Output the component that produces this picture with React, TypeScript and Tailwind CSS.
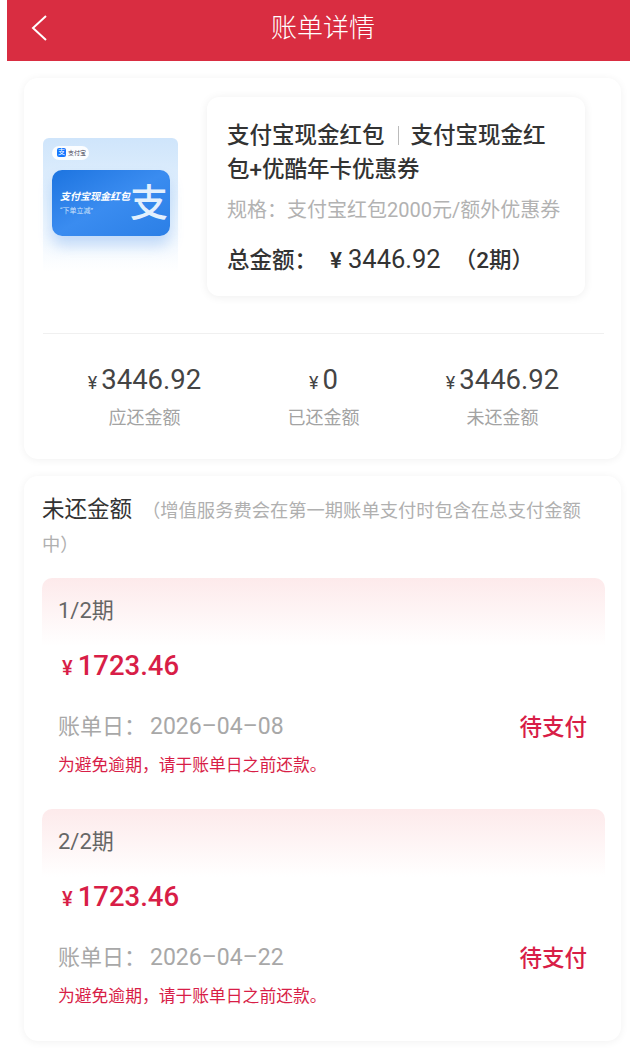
const fontStack = "font-['Roboto','Noto_Sans_CJK_SC',sans-serif]";

const stats = [
  { amount: '3446.92', label: '应还金额' },
  { amount: '0', label: '已还金额' },
  { amount: '3446.92', label: '未还金额' },
];

const installments = [
  { period: '1/2期', amount: '1723.46', date: '2026–04–08' },
  { period: '2/2期', amount: '1723.46', date: '2026–04–22' },
];

function ProductThumb() {
  return (
    <div className="w-[135px] h-[134px] mt-[16px] shrink-0 rounded-t-md bg-gradient-to-b from-[#cfe5fb] via-[#e6f2fd] to-white px-[9px] pt-[8px]">
      <div className="flex items-center gap-[2px] w-[37px] h-[14px] rounded-full bg-white/90 pl-[5px]">
        <div className="flex items-center justify-center w-[9px] h-[9px] rounded-[2px] bg-[#1677ff] text-[7px] leading-none text-white">支</div>
        <div className="text-[6px] leading-none text-[#445] whitespace-nowrap">支付宝</div>
      </div>
      <div className="flex items-center w-[118px] h-[66px] mt-[10px] rounded-[10px] bg-gradient-to-br from-[#1c74e0] via-[#3a8cf0] to-[#2b7fe6] pl-[8px] shadow-[0_10px_14px_rgba(70,140,235,0.28)]">
        <div className="w-[70px] shrink-0">
          <div className="text-[10px] leading-[12px] font-bold italic text-white whitespace-nowrap">支付宝现金红包</div>
          <div className="mt-[4px] text-[7px] leading-[8px] text-[#cfe3fb] whitespace-nowrap">“下单立减”</div>
        </div>
        <div className="text-[38px] leading-none font-medium text-[#e3f0fd]">支</div>
      </div>
    </div>
  );
}

function Installment({ period, amount, date }: { period: string; amount: string; date: string }) {
  return (
    <div>
      <div className="h-[68px] rounded-t-[10px] bg-gradient-to-b from-[#fdeaeb] to-white pl-[16px] pt-[18px] text-[22px] leading-[30px] text-[#666]">
        {period}
      </div>
      <div className="flex items-baseline h-[36px] mt-[2px] pl-[20px] font-medium text-[#d81e47]">
        <span className="mr-[5px] text-[20px]">¥</span>
        <span className="text-[27.5px] leading-[36px]">{amount}</span>
      </div>
      <div className="flex items-center justify-between mt-[28px] pl-[16px] pr-[18px]">
        <div className="text-[22px] leading-[30px] text-[#a8a8a8]">账单日&#xFF1A;<span className="ml-[4px] text-[23px]">{date}</span></div>
        <div className="text-[22.5px] leading-[30px] font-medium text-[#d81e47]">待支付</div>
      </div>
      <div className="mt-[11px] pl-[16px] text-[16.8px] leading-[24px] text-[#d81e47]">为避免逾期&#xFF0C;请于账单日之前还款&#x3002;</div>
    </div>
  );
}

export default function App() {
  return (
    <div className={`w-[630px] h-[1048px] overflow-hidden bg-white ${fontStack}`}>
      {/* Header */}
      <div className="flex items-center h-[61px] ml-[7px] pb-[5px] bg-[#d92d41] text-white">
        <svg className="ml-[24px] w-[16px] h-[26px]" viewBox="0 0 16 26" fill="none" stroke="currentColor" strokeWidth="2">
          <polyline points="15,1 2,13 15,25" />
        </svg>
        <div className="ml-[224px] text-[26px] leading-none font-light">账单详情</div>
      </div>

      {/* Product card */}
      <div className="w-[597px] h-[381px] mt-[17px] ml-[24px] pl-[19px] pr-[17px] pt-[19px] rounded-[14px] bg-white shadow-[0_1px_8px_rgba(0,0,0,0.06)]">
        <div className="flex items-center h-[199px]">
          <ProductThumb />
          <div className="w-[378px] h-[199px] ml-[29px] pl-[20px] pt-[21px] rounded-[12px] bg-white shadow-[0_1px_10px_rgba(0,0,0,0.07)]">
            <div className="w-[325px] text-[22.5px] leading-[34px] font-medium text-[#333]">
              支付宝现金红包<span className="inline-block w-px h-[19px] ml-[13px] mr-[12px] align-[-2px] bg-[#bbb]" />支付宝现金红包+优酷年卡优惠券
            </div>
            <div className="mt-[9px] text-[20px] leading-[30px] text-[#b2b2b2] whitespace-nowrap">规格&#xFF1A;支付宝红包2000元/额外优惠券</div>
            <div className="mt-[18px] text-[22.5px] leading-[32px] font-medium text-[#333] whitespace-nowrap">
              总金额&#xFF1A;<span className="ml-[13px] mr-[6px]">¥</span><span className="text-[25.5px] font-normal">3446.92</span><span className="ml-[13px]">&#xFF08;2期&#xFF09;</span>
            </div>
          </div>
        </div>
        <div className="h-px mt-[37px] bg-[#f0f0f0]" />
        <div className="grid grid-cols-3 w-[537px] mx-auto mt-[28px]">
          {stats.map((s) => (
            <div key={s.label} className="text-center">
              <div className="h-[36px] leading-[36px] text-[#444]">
                <span className="mr-[4px] text-[18px]">¥</span>
                <span className="text-[27.5px]">{s.amount}</span>
              </div>
              <div className="mt-[7px] text-[18px] leading-[26px] text-[#a3a3a3]">{s.label}</div>
            </div>
          ))}
        </div>
      </div>

      {/* Unpaid list */}
      <div className="w-[597px] h-[565px] mt-[17px] ml-[24px] px-[18px] pt-[16px] rounded-[14px] bg-white shadow-[0_1px_8px_rgba(0,0,0,0.06)]">
        <div className="w-[545px] text-[18.3px] leading-[34px] text-[#b0b0b0]">
          <span className="text-[22.5px] text-[#333]">未还金额</span>
          <span className="ml-[10px]">&#xFF08;增值服务费会在第一期账单支付时包含在总支付金额中&#xFF09;</span>
        </div>
        <div className="flex flex-col gap-[32px] w-[563px] mt-[16px]">
          {installments.map((item) => (
            <Installment key={item.period} {...item} />
          ))}
        </div>
      </div>
    </div>
  );
}
